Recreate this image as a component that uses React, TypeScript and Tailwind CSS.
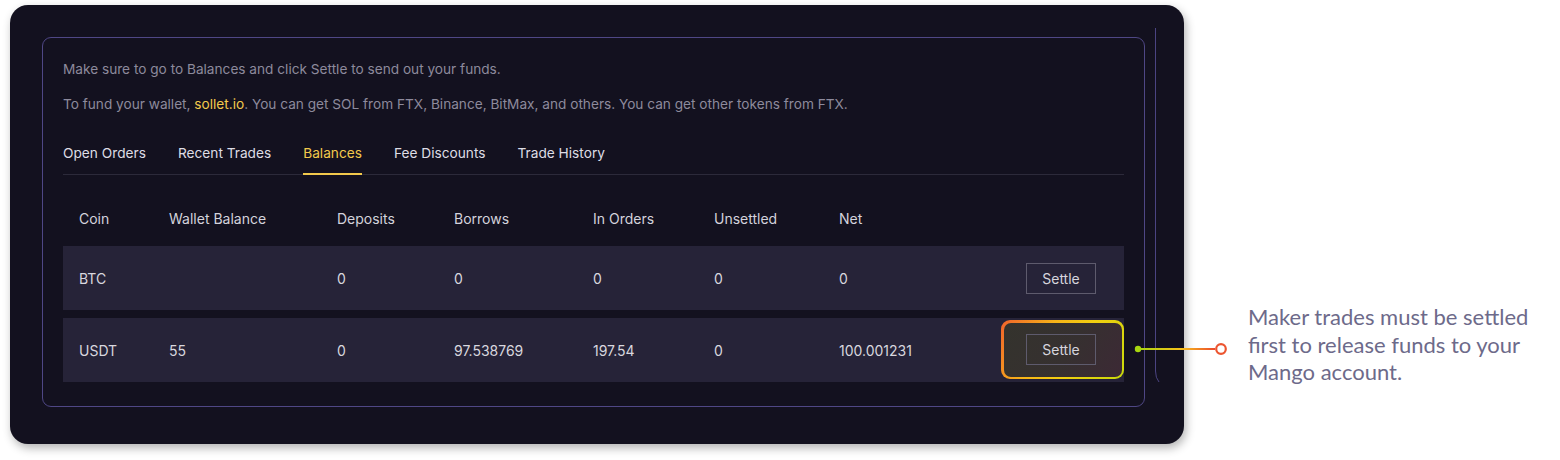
import React from "react";

const cols = "grid grid-cols-[90px_168px_117px_139px_121px_125px_1fr_auto] pl-4 pr-7";

function SettleBtn() {
  return (
    <div className="flex h-[31px] w-[70px] items-center justify-center border border-[#5e5b6d] text-[14px] text-[#d6d5dd]">
      Settle
    </div>
  );
}

export default function App() {
  const rows = [
    { coin: "BTC", wallet: "", dep: "0", bor: "0", ord: "0", uns: "0", net: "0" },
    { coin: "USDT", wallet: "55", dep: "0", bor: "97.538769", ord: "197.54", uns: "0", net: "100.001231" },
  ];
  return (
    <div className="relative h-[460px] w-[1560px] bg-white" style={{ fontFamily: "Inter, 'Noto Sans', sans-serif" }}>
      <div className="flex">
        <div className="relative ml-[10px] mt-[5px] h-[439px] w-[1174px] overflow-hidden rounded-[18px] bg-[#13111f] shadow-[2px_4px_10px_rgba(0,0,0,0.3)]">
          <svg className="absolute left-[1144px] top-[23px]" width="10" height="360" viewBox="0 0 10 360">
            <path d="M1.5 0 V343 Q1.5 350 5 354" fill="none" stroke="#4b4482" strokeWidth="1" />
          </svg>
          <div className="ml-[32px] mt-[32px] h-[370px] w-[1103px] rounded-[9px] border border-[#4f4785] px-[20px] pt-[21px]">
            <p className="text-[13.65px] leading-5 text-[#8d8a9c]">Make sure to go to Balances and click Settle to send out your funds.</p>
            <p className="mt-[15px] text-[13.65px] leading-5 text-[#8d8a9c]">
              To fund your wallet, <span className="text-[#f2c94c]">sollet.io</span>. You can get SOL from FTX, Binance, BitMax, and others. You can get other tokens from FTX.
            </p>
            <div className="mt-[29px] flex gap-8 border-b border-[#2c2a3a] text-[13.7px] leading-5">
              <div className="pb-[11px] text-[#dedde5]">Open Orders</div>
              <div className="pb-[11px] text-[#dedde5]">Recent Trades</div>
              <div className="-mb-px border-b-2 border-[#f2c94c] pb-[10px] text-[#f2c94c]">Balances</div>
              <div className="pb-[11px] text-[#dedde5]">Fee Discounts</div>
              <div className="pb-[11px] text-[#dedde5]">Trade History</div>
            </div>
            <div className={`${cols} h-[71px] items-end pb-[17px] text-[14px] leading-5 text-[#d4d3dc]`}>
              <div>Coin</div>
              <div>Wallet Balance</div>
              <div>Deposits</div>
              <div>Borrows</div>
              <div>In Orders</div>
              <div>Unsettled</div>
              <div>Net</div>
              <div className="w-[70px]" />
            </div>
            <div className="flex flex-col gap-2">
              {rows.map((r, i) => (
                <div key={r.coin} className={`relative ${cols} h-[64px] items-center bg-[#262338] text-[14px] text-[#d8d7df]`}>
                  <div>{r.coin}</div>
                  <div>{r.wallet}</div>
                  <div>{r.dep}</div>
                  <div>{r.bor}</div>
                  <div>{r.ord}</div>
                  <div>{r.uns}</div>
                  <div>{r.net}</div>
                  {i === 0 ? (
                    <SettleBtn />
                  ) : (
                    <>
                      <div className="w-[70px]" />
                      <div className="absolute right-0 top-[2px] h-[59px] w-[123px] rounded-[9px] bg-[linear-gradient(120deg,#f0622c_0%,#f7b418_35%,#f2cf10_60%,#c8db0a_100%)] p-[2.5px]">
                        <div className="flex h-full w-full items-center justify-end rounded-[7px] bg-[linear-gradient(120deg,#34332d_0%,#363030_55%,#3c2935_100%)] pr-[25.5px]">
                          <SettleBtn />
                        </div>
                      </div>
                    </>
                  )}
                </div>
              ))}
            </div>
          </div>
        </div>
        <div
          className="ml-[64px] mt-[303px] w-[300px] text-[22px] leading-[27.5px] text-[#6d6a8a]"
          style={{ fontFamily: "Lato, 'Noto Sans', sans-serif" }}
        >
          Maker trades must be settled first to release funds to your Mango account.
        </div>
      </div>
      <svg className="absolute left-[1132px] top-[340px]" width="100" height="20" viewBox="0 0 100 20">
        <defs>
          <linearGradient id="cg" x1="0" y1="0" x2="1" y2="0">
            <stop offset="0%" stopColor="#a8d610" />
            <stop offset="55%" stopColor="#f6c21a" />
            <stop offset="100%" stopColor="#ec4a2c" />
          </linearGradient>
        </defs>
        <rect x="6" y="8" width="77" height="2" fill="url(#cg)" />
        <circle cx="6" cy="9" r="3.2" fill="#a8d610" />
        <circle cx="89" cy="9" r="4.8" fill="#ffffff" stroke="#ec5530" strokeWidth="2.2" />
      </svg>
    </div>
  );
}
